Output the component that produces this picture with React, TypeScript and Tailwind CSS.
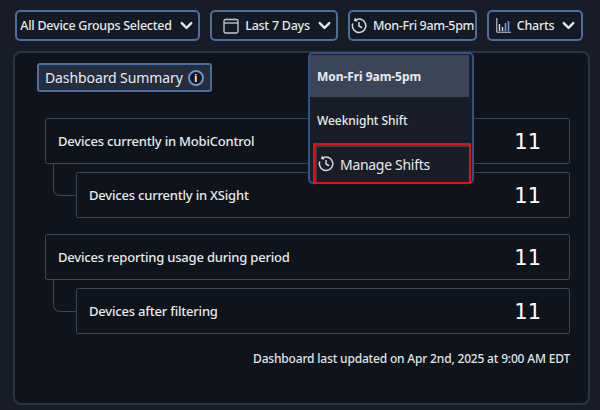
import { ChevronDown } from 'lucide-react'

const ShiftIcon = ({ size }: { size: number }) => (
    <svg width={size} height={size} viewBox="0 0 16 16" fill="none" stroke="#d5d9de" strokeWidth="1.5" strokeLinecap="round" strokeLinejoin="round" className="shrink-0">
        <path d="M4 2.4A6.7 6.7 0 1 1 1.6 6" />
        <path d="M4 2.4l.2-1.6M4 2.4l1.7.3M8 4.4V8l2.6 1.5" />
    </svg>
)

const CalendarIcon = () => (
    <svg width="16" height="17" viewBox="0 0 16 17" fill="none" className="ml-[8px] shrink-0">
        <rect x="1" y="2.5" width="14" height="13.5" rx="1.5" stroke="#c9ccd0" strokeWidth="1.3" />
        <path d="M1 6h14" stroke="#c9ccd0" strokeWidth="1.3" />
        <path d="M4.5 1v2.5M11.5 1v2.5" stroke="#5b8bc9" strokeWidth="1.3" />
    </svg>
)

const ChartIcon = () => (
    <svg width="15" height="15" viewBox="0 0 15 15" fill="none" className="ml-[3px] shrink-0">
        <path d="M.8 0v14.2H15" stroke="#d5d9de" strokeWidth="1" />
        <path d="M3.5 6v7M6.5 9v4" stroke="#d5d9de" strokeWidth="1.4" />
        <path d="M9.5 5v8M12.5 3v10" stroke="#6f9ad6" strokeWidth="1.6" />
    </svg>
)

const Chevron = () => <ChevronDown size={19} strokeWidth={3} color="#e6e8ea" className="-mx-[1px] shrink-0" />

const TopButton = ({ width, children }: { width: string; children: React.ReactNode }) => (
    <div className={`${width} h-[31px] shrink-0 rounded-[5px] border-2 border-[#4d6f9c] bg-[#141a25] flex items-center justify-center gap-[6px] whitespace-nowrap text-[12.5px] font-medium tracking-[-0.25px] text-[#e6e8ea]`}>
        {children}
    </div>
)

const StatRow = ({ label, indent }: { label: string; indent?: boolean }) => (
    <div className={`${indent ? 'ml-[31px]' : ''} relative h-[46px] rounded-[2px] border border-[#3a4656] flex items-center justify-between pl-[12px] pr-[28px]`}>
        {indent && (
            <div className="absolute left-[-24px] top-[-9px] w-[24px] h-[32px] border-l border-b border-[#3a4656] rounded-bl-[7px]" />
        )}
        <span className="pt-[2px] text-[13px] font-medium tracking-[-0.2px] text-[#e8eaec]">{label}</span>
        <span className="pt-[2px] font-['DejaVu_Sans',sans-serif] text-[21px] leading-none text-white">11</span>
    </div>
)

export default function App() {
    return (
        <div className="relative w-[600px] h-[410px] overflow-hidden bg-[#171c26] font-['Noto_Sans',sans-serif]">
            <div className="flex gap-[10px] pl-[15px] pt-[10px]">
                <TopButton width="w-[185px]">
                    <span className="pt-[2px]">All Device Groups Selected</span>
                    <Chevron />
                </TopButton>
                <TopButton width="w-[128px]">
                    <CalendarIcon />
                    <span className="pt-[2px]">Last 7 Days</span>
                    <Chevron />
                </TopButton>
                <TopButton width="w-[129px]">
                    <ShiftIcon size={16} />
                    <span className="pt-[2px] tracking-[-0.35px]">Mon-Fri 9am-5pm</span>
                </TopButton>
                <TopButton width="w-[96px]">
                    <ChartIcon />
                    <span className="pt-[2px]">Charts</span>
                    <Chevron />
                </TopButton>
            </div>

            <div className="ml-[13px] mt-[10px] w-[577px] h-[354px] rounded-[8px] border-2 border-[#2b3441] bg-[#0f131b] pt-[10px] pl-[22px] pr-[18px]">
                <div className="w-[175px] h-[29px] rounded-[3px] border-2 border-[#4d6f9c] bg-[#232d3b] flex items-center pl-[6px] gap-[5px]">
                    <span className="text-[14px] tracking-[-0.1px] text-[#e8eaec]">Dashboard Summary</span>
                    <span className="w-[16px] h-[16px] rounded-full border-2 border-[#6f94c6] bg-[#10151e] flex items-center justify-center text-[10px] font-bold leading-none text-white">i</span>
                </div>
                <div className="mt-[26px] ml-[8px] flex flex-col gap-[8px]">
                    <StatRow label="Devices currently in MobiControl" />
                    <StatRow label="Devices currently in XSight" indent />
                    <div className="h-[8px]" />
                </div>
                <div className="ml-[8px] flex flex-col gap-[8px]">
                    <StatRow label="Devices reporting usage during period" />
                    <StatRow label="Devices after filtering" indent />
                </div>
                <div className="mt-[16px] text-right text-[12px] font-medium tracking-[-0.18px] text-[#e0e3e6]">
                    Dashboard last updated on Apr 2nd, 2025 at 9:00 AM EDT
                </div>
            </div>

            <div className="absolute left-[308px] top-[52px] w-[166px] h-[132px] rounded-[5px] border-2 border-[#2f5587] bg-[#181d27] pt-[1px] text-[#e8eaec]">
                <div className="mr-[3px] h-[42px] bg-[#3a4658] flex items-center pl-[7px] pt-[1px] text-[12px] font-bold tracking-[-0.05px]">Mon-Fri 9am-5pm</div>
                <div className="mr-[3px] h-[46px] flex items-center pl-[7px] pt-[2px] text-[12px] font-medium tracking-[-0.05px]">Weeknight Shift</div>
                <div className="ml-[3px] mr-[1px] h-[41px] border-2 border-[#e0101a] shadow-[inset_2px_2px_0_#3d4248] flex items-center gap-[6px] pl-[3px] pt-[1px] text-[14px] tracking-[-0.3px]">
                    <ShiftIcon size={16} />
                    <span>Manage Shifts</span>
                </div>
            </div>
        </div>
    )
}
